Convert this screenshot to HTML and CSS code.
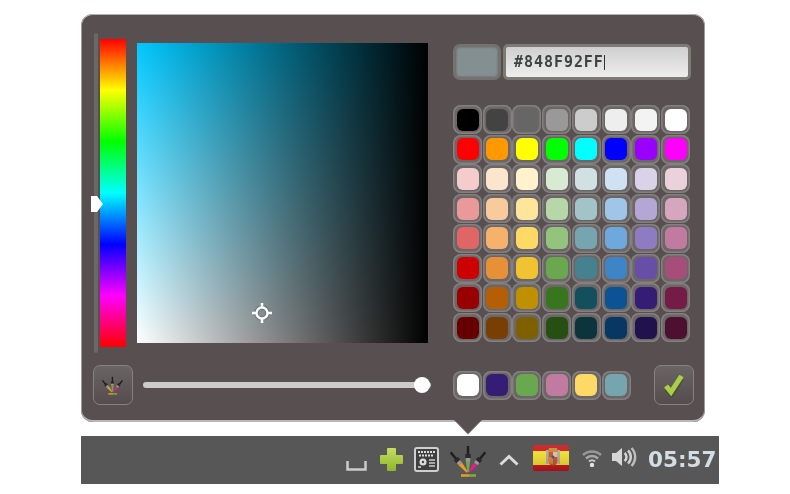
FILE: index.html
```html
<html>
<head>
  <meta charset="utf-8">
  <link rel="stylesheet" href="styles.css">
</head>
<body>
  <svg class="defs" width="0" height="0">
    <defs>
      <linearGradient id="green" x1="0" y1="0" x2="0" y2="1">
        <stop offset="0" stop-color="#c4de62"/>
        <stop offset="1" stop-color="#8fb52c"/>
      </linearGradient>
      <linearGradient id="flagshade" x1="0" y1="0" x2="0" y2="1">
        <stop offset="0" stop-color="#fff" stop-opacity="0.1"/>
        <stop offset="1" stop-color="#000" stop-opacity="0.18"/>
      </linearGradient>
      <g id="dropper">
        <path d="M16.800 1h2.400v9h-2.400z" fill="#1e1e1e"/>
        <path d="M15.300 9h5.400v4h-5.400z" fill="#2a2a2a"/>
        <path d="M15.800 13h4.400v3h-4.400z" fill="#9a9a9a"/>
        <path d="M15.800 16h4.400L18.800 27h-1.600z" fill="currentColor"/>
      </g>
      <g id="droppers">
        <use href="#dropper" color="#e0a028" transform="rotate(-40 18 28)"/>
        <use href="#dropper" color="#e0208a" transform="rotate(40 18 28)"/>
        <use href="#dropper" color="#6fa84f"/>
        <path d="M11 30.500h8" stroke="#e0a028" stroke-width="2.500"/>
        <path d="M19 30.500h7" stroke="#8aa838" stroke-width="2.500"/>
      </g>
    </defs>
  </svg>

  <div class="popup">
    <div class="main">
      <div class="hue-col">
        <div class="hue-track"></div>
        <div class="hue-bar"></div>
        <div class="hue-thumb"></div>
      </div>
      <div class="sv">
        <svg class="cross" width="22" height="22" viewBox="0 0 22 22">
          <circle cx="11" cy="11" r="5.500" fill="none" stroke="#333" stroke-width="4.500" opacity="0.3"/>
          <circle cx="11" cy="11" r="5.500" fill="none" stroke="#fff" stroke-width="2.500"/>
          <path d="M11 1v5M11 16v5M1 11h5M16 11h5" stroke="#fff" stroke-width="2.500"/>
        </svg>
      </div>
      <div class="side">
        <div class="hex-row">
          <div class="current"></div>
          <div class="hex"><span>#848F92FF</span><i class="caret"></i></div>
        </div>
        <div class="palette" id="palette"></div>
      </div>
    </div>
    <div class="bottom">
      <div class="btn">
        <svg width="22" height="19" viewBox="0 0 38 32">
          <use href="#droppers"/>
        </svg>
      </div>
      <div class="slider"><div class="slider-thumb"></div></div>
      <div class="recent" id="recent"></div>
      <div class="btn ok">
        <svg width="24" height="26" viewBox="0 0 24 26">
          <path d="M4.500 15l5 6L19.500 5" fill="none" stroke="#3e4522" stroke-width="5" opacity="0.45" transform="translate(0 2)"/>
          <path d="M4 14l5 6L19.500 4" fill="none" stroke="#a9cf46" stroke-width="5"/>
        </svg>
      </div>
    </div>
    <svg class="arrow" width="28" height="15" viewBox="0 0 28 15">
      <path d="M0 0L14 14.500 28 0z" fill="#584f50"/>
      <path d="M2 1.500L14 14 26 1.500" fill="none" stroke="#8e8a8a" stroke-width="1"/>
    </svg>
  </div>

  <div class="taskbar">
    <svg class="t-space" width="21" height="10" viewBox="0 0 21 10">
      <path d="M1.500 0v8.500h18V0" fill="none" stroke="#ccc" stroke-width="2.500"/>
    </svg>
    <svg class="t-plus" width="25" height="25" viewBox="0 0 25 25">
      <path d="M9 1h7a1 1 0 0 1 1 1v6h6a1 1 0 0 1 1 1v7a1 1 0 0 1-1 1h-6v6a1 1 0 0 1-1 1H9a1 1 0 0 1-1-1v-6H2a1 1 0 0 1-1-1V9a1 1 0 0 1 1-1h6V2a1 1 0 0 1 1-1z" fill="url(#green)"/>
    </svg>
    <svg class="t-calc" width="25" height="25" viewBox="0 0 25 25">
      <rect x="1" y="1" width="23" height="23" rx="2" fill="#3f3f3f" stroke="#cfcfcf" stroke-width="2"/>
      <path d="M4 5h17M5 8.500h15" stroke="#ddd" stroke-width="2" stroke-dasharray="2 1"/>
      <path d="M15 13h6M15 16h6M15 19h6" stroke="#ccc" stroke-width="1.500"/>
      <circle cx="9" cy="15" r="3.500" fill="#ddd"/>
      <circle cx="9" cy="15" r="1.200" fill="#444"/>
      <path d="M4 20h3" stroke="#ddd" stroke-width="1.500"/>
    </svg>
    <svg class="t-drop" width="38" height="32" viewBox="0 0 38 32">
      <use href="#droppers"/>
    </svg>
    <svg class="t-up" width="20" height="12" viewBox="0 0 20 12">
      <path d="M1.500 10.500L10 2.500l8.500 8" fill="none" stroke="#dcdcdc" stroke-width="3"/>
    </svg>
    <svg class="t-flag" width="36" height="26" viewBox="0 0 36 26">
      <rect width="36" height="26" rx="2" fill="#c9141c"/>
      <rect y="6" width="36" height="14" fill="#f6e32c"/>
      <rect x="13" y="5" width="2.500" height="14" fill="#b9a9a0"/>
      <rect x="24.500" y="5" width="2.500" height="14" fill="#b9a9a0"/>
      <path d="M16 3h8l1 4H15z" fill="#c8862c"/>
      <path d="M15.500 7h9v9a4.500 4.500 0 0 1-9 0z" fill="#c2502e"/>
      <path d="M20 7h4.500v5H20z" fill="#d8c8b0"/>
      <path d="M15.500 12H20v7a4.500 4.500 0 0 1-4.500-3z" fill="#d8862c"/>
      <circle cx="20" cy="12" r="1.500" fill="#3a4a9a"/>
      <rect width="36" height="26" rx="2" fill="url(#flagshade)"/>
    </svg>
    <svg class="t-wifi" width="20" height="18" viewBox="0 0 20 18">
      <path d="M1 6a13 13 0 0 1 18 0" fill="none" stroke="#989898" stroke-width="2.500"/>
      <path d="M4 9.500a8.500 8.500 0 0 1 12 0" fill="none" stroke="#a8a8a8" stroke-width="2.500"/>
      <path d="M7 12.500a4.200 4.200 0 0 1 6 0" fill="none" stroke="#c8c8c8" stroke-width="2.200"/>
      <circle cx="10" cy="16" r="2.200" fill="#e4e4e4"/>
    </svg>
    <svg class="t-vol" width="25" height="22" viewBox="0 0 25 22">
      <path d="M0 7h4l6-5v18l-6-5H0z" fill="#d6d6d6"/>
      <path d="M12.500 7a5 5 0 0 1 0 8" fill="none" stroke="#d6d6d6" stroke-width="2.500"/>
      <path d="M16 4.500a9 9 0 0 1 0 13" fill="none" stroke="#d0d0d0" stroke-width="2.500"/>
      <path d="M19.500 2a13 13 0 0 1 0 18" fill="none" stroke="#bdbdbd" stroke-width="2.500"/>
    </svg>
    <div class="clock">05:57</div>
  </div>

  <script>
    var palette = [
      '000000','434343','666666','999999','cccccc','eeeeee','f3f3f3','ffffff',
      'ff0000','ff9900','ffff00','00ff00','00ffff','0000ff','9900ff','ff00ff',
      'f4cccc','fce5cd','fff2cc','d9ead3','d0e0e3','cfe2f3','d9d2e9','ead1dc',
      'ea9999','f9cb9c','ffe599','b6d7a8','a2c4c9','9fc5e8','b4a7d6','d5a6bd',
      'e06666','f6b26b','ffd966','93c47d','76a5af','6fa8dc','8e7cc3','c27ba0',
      'cc0000','e69138','f1c232','6aa84f','45818e','3d85c6','674ea7','a64d79',
      '990000','b45f06','bf9000','38761d','134f5c','0b5394','351c75','741b47',
      '660000','783f04','7f6000','274e13','0c343d','073763','20124d','4c1130'
    ];
    var recent = ['ffffff','351c75','6aa84f','c27ba0','ffd966','76a5af'];

    function fill(id, colors) {
      var box = document.getElementById(id);
      colors.forEach(function (c) {
        var cell = document.createElement('div');
        cell.className = 'cell';
        var chip = document.createElement('div');
        chip.className = 'chip';
        chip.style.backgroundColor = '#' + c;
        cell.appendChild(chip);
        box.appendChild(cell);
      });
    }
    fill('palette', palette);
    fill('recent', recent);
  </script>
</body>
</html>
```

FILE: styles.css
```css
body {
  margin: 0;
  background: #fff;
  font-family: "DejaVu Sans", sans-serif;
}

.defs {
  display: block;
  height: 0;
}

/* the reference is a slightly soft upscale */
.popup, .taskbar {
  filter: blur(0.4px);
}

.popup {
  position: relative;
  box-sizing: border-box;
  width: 624px;
  height: 408px;
  margin: 14px 0 0 81px;
  padding: 19px 11px 16px 12px;
  display: flex;
  flex-direction: column;
  background: #584f50;
  border-radius: 12px;
  box-shadow: inset 0 1px 0 #b5b2b2, inset 1px 0 0 #a09c9c, inset -1px 0 0 #a09c9c, inset 0 -2px 0 #b8b6b6;
}

.main {
  display: flex;
  height: 320px;
}

.hue-col {
  position: relative;
  display: flex;
  width: 33px;
  flex: none;
}
.hue-track {
  width: 4px;
  margin-left: 1px;
  border-radius: 2px;
  background: #6c6666;
}
.hue-bar {
  width: 26px;
  height: 308px;
  margin: 6px 0 0 2px;
  background: linear-gradient(to bottom, #f00, #ff0 16.67%, #0f0 33.33%, #0ff 50%, #00f 66.67%, #f0f 83.33%, #f00);
}
.hue-thumb {
  position: absolute;
  left: -2px;
  top: 163px;
  width: 12px;
  height: 16px;
  background: #fff;
  clip-path: polygon(0 0, 50% 0, 100% 50%, 50% 100%, 0 100%);
}

.sv {
  position: relative;
  width: 291px;
  height: 300px;
  margin: 10px 0 0 11px;
  flex: none;
  background:
    linear-gradient(to right, rgba(0, 0, 0, 0), #000),
    linear-gradient(to bottom, #00c8ff, #fff);
}
.cross {
  position: absolute;
  left: 114px;
  top: 259px;
}

.side {
  margin: 11px 0 0 25px;
}
.hex-row {
  display: flex;
  gap: 2px;
  height: 36px;
}
.current {
  box-sizing: border-box;
  width: 48px;
  border: 3px solid #767171;
  border-radius: 7px;
  background: #848f92;
  box-shadow: inset 0 0 2px #555;
}
.hex {
  box-sizing: border-box;
  display: flex;
  align-items: center;
  width: 188px;
  padding-left: 8px;
  border: 3px solid #7d7a76;
  border-radius: 5px;
  background: linear-gradient(to bottom, #cfcfcf, #eeeeee);
  color: #3c4446;
  font-family: "DejaVu Sans Mono", monospace;
  font-weight: bold;
  font-size: 15px;
  letter-spacing: 0.95px;
}
.caret {
  width: 1px;
  height: 15px;
  background: #333;
}

.palette {
  display: grid;
  grid-template-columns: repeat(8, 29px);
  grid-auto-rows: 29px;
  gap: 0.72px;
  margin-top: 25px;
}
.cell {
  box-sizing: border-box;
  padding: 3.500px;
  width: 29px;
  height: 29px;
  border-radius: 8px;
  background: #6c6666;
  box-shadow: inset 0 0 0 1.500px #848080;
}
.chip {
  width: 22px;
  height: 22px;
  border-radius: 6px;
}

.bottom {
  display: flex;
  align-items: center;
  height: 40px;
  margin-top: 12px;
}
.btn {
  box-sizing: border-box;
  display: flex;
  align-items: center;
  justify-content: center;
  width: 40px;
  height: 40px;
  flex: none;
  border: 1px solid #878282;
  border-radius: 7px;
  background: linear-gradient(to bottom, #6b6464, #554d4d);
}
.slider {
  position: relative;
  width: 288px;
  height: 6px;
  margin: -1px 0 0 10px;
  border-radius: 3px;
  background: #cdcbcb;
}
.slider-thumb {
  position: absolute;
  left: 271px;
  top: -5px;
  width: 16px;
  height: 16px;
  border-radius: 50%;
  background: #fff;
}
.recent {
  display: flex;
  gap: 0.72px;
  margin-left: 22px;
  width: 178px;
}
.ok {
  margin-left: 23px;
}

.arrow {
  position: absolute;
  left: 373px;
  bottom: -13px;
}

.taskbar {
  display: flex;
  align-items: center;
  box-sizing: border-box;
  width: 638px;
  height: 48px;
  margin: 14px 0 0 81px;
  background: #575757;
  color: #d4dce4;
}
.t-space { margin: 11px 0 0 265px; }
.t-plus { margin: -2px 0 0 12px; }
.t-calc { margin: -2px 0 0 10px; }
.t-drop { margin: 2px 0 0 11px; }
.t-up { margin: 0 0 0 11px; }
.t-flag { margin: -4px 0 0 14px; }
.t-wifi { margin: -4px 0 0 13px; }
.t-vol { margin: -6px 0 0 10px; }
.clock {
  margin: -2px 0 0 11px;
  font-weight: bold;
  font-size: 21.500px;
  white-space: nowrap;
}
```
